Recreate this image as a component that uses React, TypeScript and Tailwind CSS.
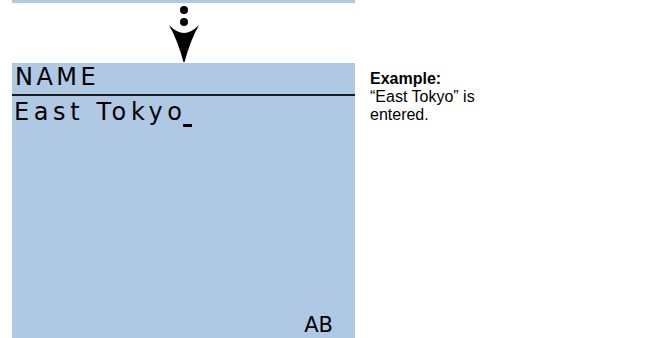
import React from 'react';

const LCD = { fontFamily: '"DejaVu Sans", sans-serif' };

function StepArrow() {
  return (
    <svg width="32" height="60" viewBox="0 0 32 60" className="block">
      <circle cx="16" cy="7" r="4" fill="#000" />
      <circle cx="16" cy="19" r="4" fill="#000" />
      <path d="M1 22 Q9 30 16 30 Q23 30 31 22 Q22 38 16.6 59 L15.4 59 Q10 38 1 22 Z" fill="#000" />
    </svg>
  );
}

export default function App() {
  return (
    <div className="w-[653px] h-[338px] bg-white overflow-hidden flex">
      <div className="ml-[12px] w-[343px] flex flex-col">
        <div className="h-[3px] bg-[#afc9e5]" />
        <div className="h-[60px] flex justify-center">
          <StepArrow />
        </div>
        <div className="flex-1 bg-[#afc9e5] flex flex-col text-black" style={LCD}>
          <div className="h-[30px] flex items-end pl-[3px] pb-[4px] text-[24px] leading-none tracking-[3.5px]">NAME</div>
          <div className="h-[2px] bg-[#1a1a1a] mt-[1px]" />
          <div className="pl-[2px] pt-[4px] text-[24px] leading-none tracking-[4.6px] flex items-end">
            <span>East Tokyo</span>
            <span className="inline-block w-[9px] h-[3px] bg-black mb-[-3px] ml-[-4px]" />
          </div>
          <div className="flex-1" />
          <div className="flex justify-end pr-[22px] pb-[2px] text-[21px] leading-none">AB</div>
        </div>
      </div>
      <div className="ml-[15px] mt-[70px] text-[16px] leading-[18px] text-black" style={{ fontFamily: '"Liberation Sans", Arial, sans-serif' }}>
        <div className="font-bold">Example:</div>
        <div>“East Tokyo” is</div>
        <div>entered.</div>
      </div>
    </div>
  );
}
